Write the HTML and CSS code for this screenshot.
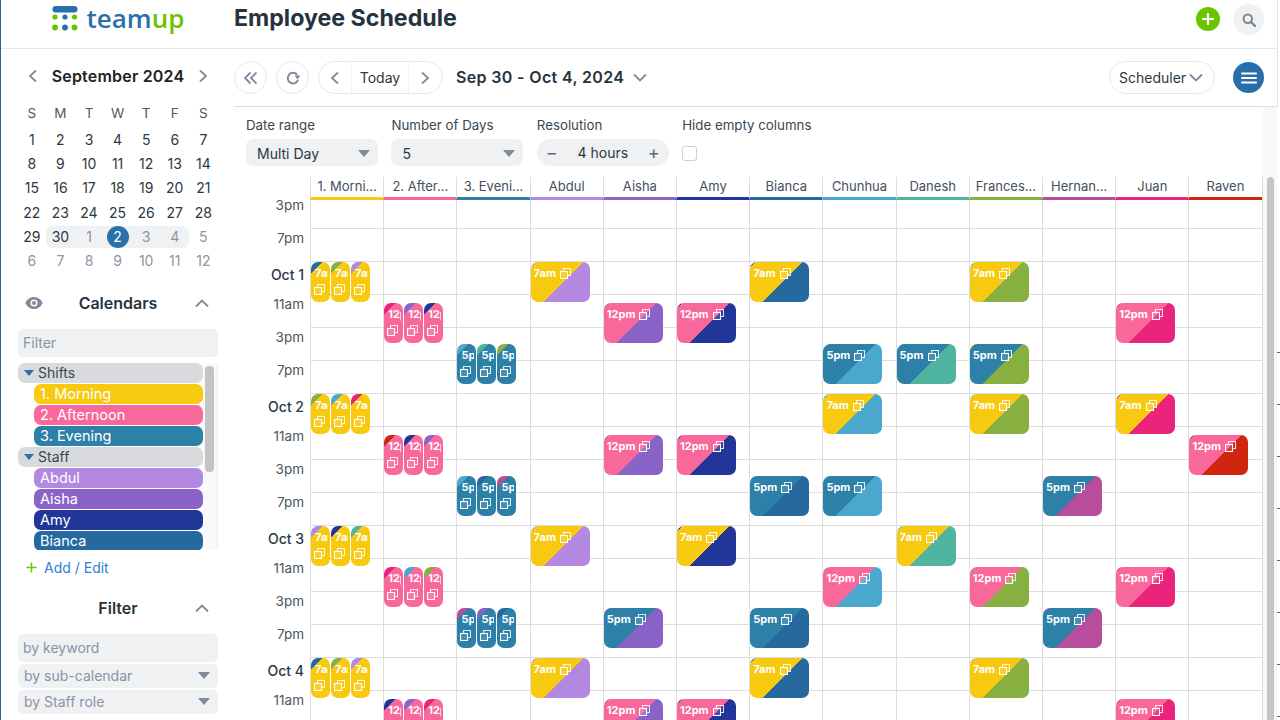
FILE: index.html
```html
<!DOCTYPE html>
<html lang="en">
<head>
  <meta charset="UTF-8" />
  <meta name="viewport" content="width=device-width, initial-scale=1.0" />
  <title>Employee Schedule</title>
  <link rel="stylesheet" href="styles.css">
</head>
<body>
  <div class="app">
    <header class="topbar">
      <div class="brand">
        <svg class="brand-mark" width="26" height="26" viewBox="0 0 26 26">
          <rect x="0.5" y="0" width="25" height="6.5" rx="3.2" fill="#2a70ad"/>
          <circle cx="3" cy="11" r="2.6" fill="#6cc400"/>
          <circle cx="13" cy="11" r="2.6" fill="#2a70ad"/>
          <circle cx="22.5" cy="11" r="2.6" fill="#6cc400"/>
          <circle cx="3" cy="21.5" r="2.9" fill="#6cc400"/>
          <circle cx="13" cy="21.5" r="2.9" fill="#2a70ad"/>
          <circle cx="22.5" cy="21.5" r="2.9" fill="#6cc400"/>
        </svg>
        <span class="brand-name">team<span class="brand-up">up</span></span>
      </div>
      <h1 class="page-title">Employee Schedule</h1>
      <button class="add-btn" aria-label="Add">
        <svg width="12" height="12" viewBox="0 0 12 12"><path d="M6 1v10M1 6h10" stroke="#fff" stroke-width="2.2" stroke-linecap="round"/></svg>
      </button>
      <button class="search-btn" aria-label="Search">
        <svg width="14" height="14" viewBox="0 0 14 14" fill="none"><circle cx="5.8" cy="5.8" r="4.2" stroke="#7b858f" stroke-width="2"/><path d="M9 9l4 4" stroke="#7b858f" stroke-width="2.4" stroke-linecap="round"/></svg>
      </button>
    </header>

    <div class="workspace">
      <aside class="sidebar">
        <div class="month-head">
          <svg class="chev" width="10" height="14" viewBox="0 0 10 14"><path d="M8 1.5L2 7l6 5.5" /></svg>
          <span class="month-title">September 2024</span>
          <svg class="chev" width="10" height="14" viewBox="0 0 10 14"><path d="M2 1.5L8 7l-6 5.5" /></svg>
        </div>
        <div class="month-grid" id="monthGrid"></div>

        <div class="panel-head panel-head-calendars">
          <svg class="eye" width="18" height="12" viewBox="0 0 18 12"><path d="M9 0C5 0 2 2.500 0.300 6 2 9.500 5 12 9 12s7-2.500 8.700-6C16 2.500 13 0 9 0z" fill="#7f8a9b"/><circle cx="9" cy="6" r="3.500" fill="#fff"/><circle cx="9" cy="6" r="2" fill="#7f8a9b"/></svg>
          <h2>Calendars</h2>
          <svg class="chev-up" width="14" height="9" viewBox="0 0 14 9"><path d="M1 7.500L7 1.500l6 6" /></svg>
        </div>
        <div class="field field-input">Filter</div>

        <div class="cal-list">
          <div class="cal-items" id="calItems"></div>
          <div class="cal-scroll"><div class="cal-thumb"></div></div>
        </div>

        <div class="add-edit">
          <svg width="11" height="11" viewBox="0 0 11 11"><path d="M5.500 0.500v10M0.500 5.500h10" stroke="#6cc400" stroke-width="1.500"/></svg>
          <span>Add / Edit</span>
        </div>

        <div class="panel-head panel-head-filter">
          <h2>Filter</h2>
          <svg class="chev-up" width="14" height="9" viewBox="0 0 14 9"><path d="M1 7.500L7 1.500l6 6" /></svg>
        </div>
        <div class="field field-input">by keyword</div>
        <div class="field field-select">by sub-calendar<i class="caret"></i></div>
        <div class="field field-select">by Staff role<i class="caret"></i></div>
      </aside>

      <main class="main">
        <div class="toolbar">
          <button class="round-btn" aria-label="Collapse">
            <svg class="chev" width="16" height="14" viewBox="0 0 16 14"><path d="M7.500 1.500L2 7l5.500 5.500M13.500 1.500L8 7l5.500 5.500" stroke-width="2"/></svg>
          </button>
          <button class="round-btn" aria-label="Refresh">
            <svg width="16" height="16" viewBox="0 0 16 16" fill="none"><path d="M13 10A5.300 5.300 0 1 1 12.300 5" stroke="#7f8a9b" stroke-width="2"/><path d="M9.500 5.500h6l-3 4z" fill="#7f8a9b"/></svg>
          </button>
          <div class="date-nav">
            <svg class="chev" width="10" height="14" viewBox="0 0 10 14"><path d="M8 1.500L2 7l6 5.500" /></svg>
            <span>Today</span>
            <svg class="chev" width="10" height="14" viewBox="0 0 10 14"><path d="M2 1.500L8 7l-6 5.500" /></svg>
          </div>
          <div class="date-title">Sep 30 - Oct 4, 2024</div>
          <svg class="chev date-chev" width="14" height="9" viewBox="0 0 14 9"><path d="M1 1.500l6 6 6-6" /></svg>
          <div class="view-select">
            <span>Scheduler</span>
            <svg class="chev" width="14" height="9" viewBox="0 0 14 9"><path d="M1 1.500l6 6 6-6" /></svg>
          </div>
          <button class="menu-btn" aria-label="Menu">
            <svg width="16" height="12" viewBox="0 0 16 12"><path d="M1 1.500h14M1 6h14M1 10.500h14" stroke="#fff" stroke-width="2" stroke-linecap="round"/></svg>
          </button>
        </div>

        <div class="content">
          <div class="content-inner">
            <div class="options">
              <div class="option">
                <label>Date range</label>
                <div class="opt-select">Multi Day<i class="caret"></i></div>
              </div>
              <div class="option">
                <label>Number of Days</label>
                <div class="opt-select">5<i class="caret"></i></div>
              </div>
              <div class="option">
                <label>Resolution</label>
                <div class="opt-stepper"><span class="step">−</span><span>4 hours</span><span class="step">+</span></div>
              </div>
              <div class="option">
                <label>Hide empty columns</label>
                <div class="opt-check"><span class="checkbox"></span></div>
              </div>
            </div>
            <div class="schedule">
              <div class="sched-head" id="schedHead"></div>
              <div class="sched-body" id="schedBody"></div>
            </div>
          </div>
          <div class="content-scroll"><div class="content-thumb"></div></div>
        </div>
      </main>
      <div class="edge"></div>
    </div>
  </div>
  <script src="script.js"></script>
</body>
</html>
```

FILE: styles.css
```css
* {
  box-sizing: border-box;
}
html, body {
  margin: 0;
  height: 100%;
  overflow: hidden;
}
body {
  font-family: Inter, "Liberation Sans", sans-serif;
  font-size: 14px;
  color: #2c3842;
  background: #fff;
}
button {
  padding: 0;
  border: none;
  font: inherit;
  display: flex;
  align-items: center;
  justify-content: center;
}
h1, h2 {
  margin: 0;
}
.app {
  height: 720px;
  display: flex;
  flex-direction: column;
  border-left: 1px solid #26699f;
}

/* top bar */
.topbar {
  height: 49px;
  flex: none;
  display: flex;
  align-items: flex-start;
  border-bottom: 1px solid #e3e8f2;
  margin-right: 3px;
}
.brand {
  width: 233px;
  padding: 6px 0 0 51px;
  display: flex;
  gap: 8.5px;
}
.brand-mark {
  flex: none;
}
.brand-name {
  font-family: "Open Sans", sans-serif;
  font-weight: 600;
  font-size: 26px;
  line-height: 25px;
  color: #2a70ad;
}
.brand-up {
  color: #6cc400;
}
.page-title {
  flex: 1;
  font-size: 23.2px;
  font-weight: 700;
  line-height: 36px;
  color: #25333f;
}
.add-btn {
  width: 24px;
  height: 24px;
  margin-top: 7px;
  border-radius: 50%;
  background: #6cc400;
}
.search-btn {
  width: 31px;
  height: 31px;
  margin: 4px 13px 0 13px;
  border-radius: 50%;
  background: #eff1f3;
}

.workspace {
  flex: 1;
  min-height: 0;
  display: flex;
}

/* sidebar */
.sidebar {
  width: 233px;
  flex: none;
  padding: 0 16px 0 17px;
}
.chev path, .chev-up path {
  fill: none;
  stroke: #7f8a9b;
  stroke-width: 1.8;
}
.month-head {
  height: 30px;
  margin-top: 12px;
  padding: 0 10px;
  display: flex;
  align-items: center;
  justify-content: space-between;
}
.month-title {
  font-size: 16px;
  font-weight: 600;
  letter-spacing: 0.2px;
  color: #222;
}
.month-grid {
  margin-left: -0.5px;
  padding-top: 10px;
  display: grid;
  grid-template-columns: repeat(7, 28.6px);
  grid-template-rows: 27px repeat(6, 24.2px);
  text-align: center;
  line-height: 24px;
}
.day-name {
  color: #4d5864;
  font-size: 13.5px;
}
.day.other {
  color: #8995a5;
}
.day.range {
  line-height: 22px;
  border-top: 1px solid transparent;
  border-bottom: 1px solid transparent;
  background: #eff1f3;
  background-clip: padding-box;
}
.day.range-start {
  border-radius: 7px 0 0 7px;
}
.day.range-end {
  border-radius: 0 7px 7px 0;
}
.day.today span {
  display: block;
  width: 22px;
  height: 22px;
  margin: 0 auto;
  border-radius: 50%;
  color: #fff;
  background: #2a70ad;
}
.panel-head {
  position: relative;
  height: 24px;
  display: flex;
  align-items: center;
  justify-content: center;
}
.panel-head h2 {
  font-size: 16px;
  font-weight: 600;
  color: #25333f;
}
.panel-head-calendars {
  margin-top: 18px;
}
.panel-head-filter {
  margin-top: 10px;
}
.eye {
  position: absolute;
  left: 7px;
  top: 6px;
}
.chev-up {
  position: absolute;
  right: 9px;
  top: 8px;
}
.field {
  margin-top: 2px;
  padding: 0 5px 1px;
  border-radius: 5px;
  background: #eff1f3;
  color: #8a94a6;
  display: flex;
  align-items: center;
  justify-content: space-between;
}
.field-input {
  height: 28px;
  margin-top: 14px;
}
.field-select {
  height: 24px;
  padding: 0 8px 2px 6px;
}
.caret {
  width: 0;
  height: 0;
  border-left: 6px solid transparent;
  border-right: 6px solid transparent;
  border-top: 7px solid #7f8a9b;
}
.cal-list {
  height: 187px;
  margin-top: 6px;
  display: flex;
  overflow: hidden;
}
.cal-items {
  width: 185px;
  flex: none;
}
.cal-group, .cal-item {
  height: 20px;
  margin-bottom: 1px;
  border-radius: 7px;
  line-height: 20px;
}
.cal-group {
  padding-left: 6px;
  background: #d9dadd;
  color: #3a4652;
  display: flex;
  align-items: center;
  gap: 4px;
}
.cal-group .caret {
  border-left-width: 5px;
  border-right-width: 5px;
  border-top: 6px solid #2a70ad;
}
.cal-item {
  margin-left: 16px;
  padding-left: 6px;
  color: #fff;
  font-size: 14.5px;
}
.cal-scroll {
  width: 15px;
  padding: 3px 3px 0 2px;
  background: #f9f9f9;
  border-right: 1px solid #ececec;
}
.cal-thumb {
  height: 106px;
  border-radius: 4px;
  background: #c4c4c4;
}
.add-edit {
  height: 36px;
  padding: 0 0 2px 8px;
  display: flex;
  align-items: center;
  gap: 7px;
  color: #2b80d8;
}

/* toolbar */
.main {
  flex: 1;
  min-width: 0;
  display: flex;
  flex-direction: column;
}
.toolbar {
  height: 58px;
  flex: none;
  padding-top: 12px;
  padding-right: 13px;
  display: flex;
  align-items: flex-start;
  border-bottom: 1px solid #dcdee2;
}
.round-btn {
  width: 33px;
  height: 33px;
  margin-right: 9px;
  border: 1px solid #e6e8f0;
  border-radius: 50%;
  background: #fff;
}
.date-nav {
  width: 125px;
  height: 33px;
  padding: 0 12px 0 11px;
  display: flex;
  align-items: center;
  justify-content: space-between;
  border: 1px solid #e6e8f0;
  border-radius: 17px;
  color: #2c3842;
}
.date-nav span {
  width: 58px;
  height: 100%;
  line-height: 31px;
  text-align: center;
  border-left: 1px solid #f1f2f6;
  border-right: 1px solid #f1f2f6;
}
.date-title {
  margin-left: 13px;
  font-size: 16px;
  font-weight: 600;
  letter-spacing: 0.35px;
  line-height: 33px;
  color: #25333f;
}
.date-chev {
  margin: 12px 0 0 9px;
}
.view-select {
  width: 106px;
  height: 33px;
  margin-left: auto;
  padding: 0 11px 0 9px;
  display: flex;
  align-items: center;
  justify-content: space-between;
  border: 1px solid #e6e8f0;
  border-radius: 17px;
}
.menu-btn {
  width: 31px;
  height: 31px;
  margin: 1px 0 0 18px;
  border-radius: 50%;
  background: #2a6ea9;
}

/* options */
.content {
  flex: 1;
  min-height: 0;
  display: flex;
}
.content-inner {
  width: 1028.6px;
  flex: none;
  overflow: hidden;
}
.options {
  height: 70px;
  padding: 10px 0 0 12px;
  display: flex;
  gap: 13.4px;
}
.option {
  width: 132px;
}
.option label {
  display: block;
  height: 22px;
  font-size: 13.3px;
  line-height: 17px;
  color: #3a4652;
  white-space: nowrap;
}
.opt-select {
  height: 27px;
  padding: 1px 8px 0 11px;
  display: flex;
  align-items: center;
  justify-content: space-between;
  border-radius: 7px;
  background: #eff1f3;
}
.opt-stepper {
  height: 27px;
  padding: 0 9px;
  display: flex;
  align-items: center;
  justify-content: space-between;
  border-radius: 14px;
  background: #eff1f3;
}
.step {
  color: #5d6875;
  font-size: 18px;
  line-height: 18px;
}
.opt-check {
  padding-top: 7px;
}
.checkbox {
  display: block;
  width: 15px;
  height: 15px;
  border: 1px solid #ccd2da;
  border-radius: 3px;
  background: #fff;
}

/* schedule */
.schedule {
  border-right: 1px solid #dcdcdc;
}
.sched-head {
  height: 23px;
  padding-left: 76px;
  display: grid;
  grid-template-columns: repeat(13, 1fr);
}
.col-name {
  border-left: 1px solid #dcdcdc;
  border-bottom: 3px solid #888;
  font-size: 13px;
  line-height: 18px;
  text-align: center;
  white-space: nowrap;
  color: #44505c;
}
.sched-body {
  display: grid;
  grid-template-columns: 76px repeat(13, 1fr);
}
.times {
  text-align: right;
  padding-right: 6px;
}
.time {
  height: 33px;
  line-height: 18px;
  font-size: 13.5px;
  color: #4a5560;
  white-space: nowrap;
}
.time.first {
  margin-top: -4px;
}
.time.day-start {
  padding-top: 4px;
  font-size: 14px;
  font-weight: 500;
  color: #2c3842;
}
.col {
  position: relative;
  border-left: 1px solid #dcdcdc;
}
.cell {
  height: 33px;
  border-bottom: 1px solid #dcdcdc;
}
.cell.first {
  height: 29px;
}
.shift {
  position: absolute;
  left: 0;
  width: 59px;
  height: 40px;
  display: flex;
  gap: 1px;
}
.event {
  flex: 1;
  min-width: 0;
  padding: 4px 2px 0 3px;
  display: flex;
  flex-wrap: wrap;
  align-content: flex-start;
  align-items: center;
  gap: 4px;
  border-radius: 7px;
  color: #fff;
  font-size: 11px;
  font-weight: 700;
  line-height: 14px;
}
.event-label {
  max-width: 100%;
  overflow: hidden;
  white-space: nowrap;
}
.shift.multi .event-label {
  padding-left: 1px;
}
.event svg {
  flex: none;
}

/* scrollbars at the edge */
.content-scroll {
  flex: 1;
  padding: 70px 3px 0 4px;
  background: #f8f8f8;
}
.content-thumb {
  height: 100%;
  border-radius: 4px 4px 0 0;
  background: #c4c4c4;
}
.edge {
  width: 3px;
  flex: none;
  margin-top: -49px;
  background:
    linear-gradient(#e2e2e2, #e2e2e2) 0 0 / 1px 107px no-repeat,
    repeating-linear-gradient(180deg, #2a70ad 0 1px, #fff 1px 52px) 0 352px / 100% 368px no-repeat;
}
```

FILE: script.js
```js
const colors = {
  morning: '#f7c90f',
  afternoon: '#f9689a',
  evening: '#2d80a8',
  abdul: '#b388e0',
  aisha: '#8963c8',
  amy: '#223699',
  bianca: '#26699f',
  chunhua: '#4aa8cf',
  danesh: '#4fb5a0',
  frances: '#88b041',
  hernan: '#b84d9e',
  juan: '#e9247a',
  raven: '#d0260f'
};

const columns = [
  ['1. Morni...', 'morning'], ['2. After...', 'afternoon'], ['3. Eveni...', 'evening'],
  ['Abdul', 'abdul'], ['Aisha', 'aisha'], ['Amy', 'amy'], ['Bianca', 'bianca'],
  ['Chunhua', 'chunhua'], ['Danesh', 'danesh'], ['Frances...', 'frances'],
  ['Hernan...', 'hernan'], ['Juan', 'juan'], ['Raven', 'raven']
];

const shiftNames = ['morning', 'afternoon', 'evening'];
const shiftLabels = ['7am', '12pm', '5pm'];

// who works which shift: [day, shift] per staff column (day 0 is Oct 1)
const staffShifts = {
  abdul: [[0, 0], [2, 0], [3, 0]],
  aisha: [[0, 1], [1, 1], [2, 2], [3, 1]],
  amy: [[0, 1], [1, 1], [2, 0], [3, 1]],
  bianca: [[0, 0], [1, 2], [2, 2], [3, 0]],
  chunhua: [[0, 2], [1, 0], [1, 2], [2, 1]],
  danesh: [[0, 2], [2, 0]],
  frances: [[0, 0], [0, 2], [1, 0], [2, 1], [3, 0]],
  hernan: [[1, 2], [2, 2]],
  juan: [[0, 1], [1, 0], [2, 1], [3, 1]],
  raven: [[1, 1]]
};

// staff order inside the three shift columns
const shiftStaff = {
  morning: [['bianca', 'frances', 'abdul'], ['frances', 'chunhua', 'juan'], ['abdul', 'amy', 'danesh'], ['bianca', 'frances', 'abdul']],
  afternoon: [['juan', 'aisha', 'amy'], ['raven', 'amy', 'aisha'], ['juan', 'chunhua', 'frances'], ['amy', 'aisha', 'juan']],
  evening: [['chunhua', 'danesh', 'frances'], ['chunhua', 'bianca', 'hernan'], ['hernan', 'aisha', 'bianca']]
};

const copyIcon = '<svg width="11" height="11" viewBox="0 0 11 11" fill="none" stroke="#fff" stroke-width="1.1">' +
  '<rect x="0.5" y="3.5" width="7" height="7" fill="rgba(255,255,255,.12)"/>' +
  '<path d="M3.500 3V.5h7v7H8" opacity=".85"/></svg>';

const shiftTop = (day, shift) => 62 + 132 * day + 41 * shift;

function eventEl(label, background) {
  const ev = document.createElement('div');
  ev.className = 'event';
  ev.style.background = background;
  ev.innerHTML = `<span class="event-label">${label}</span>${copyIcon}`;
  return ev;
}

function shiftEl(day, shift, multi) {
  const el = document.createElement('div');
  el.className = multi ? 'shift multi' : 'shift';
  el.style.top = `${shiftTop(day, shift)}px`;
  return el;
}

function renderMonth() {
  const grid = document.getElementById('monthGrid');
  ['S', 'M', 'T', 'W', 'T', 'F', 'S'].forEach(d => {
    grid.insertAdjacentHTML('beforeend', `<div class="day-name">${d}</div>`);
  });
  const days = [];
  for (let i = 1; i <= 30; i++) days.push({ n: i });
  for (let i = 1; i <= 12; i++) days.push({ n: i, other: true });
  days.forEach((d, i) => {
    const cell = document.createElement('div');
    cell.className = 'day';
    if (d.other) cell.classList.add('other');
    if (i >= 29 && i <= 33) cell.classList.add('range');
    if (i === 29) cell.classList.add('range-start');
    if (i === 33) cell.classList.add('range-end');
    if (d.other && d.n === 2) cell.classList.add('today');
    cell.innerHTML = `<span>${d.n}</span>`;
    grid.appendChild(cell);
  });
}

function renderCalendars() {
  const list = document.getElementById('calItems');
  const rows = [
    ['Shifts'], ['1. Morning', 'morning'], ['2. Afternoon', 'afternoon'], ['3. Evening', 'evening'],
    ['Staff'], ['Abdul', 'abdul'], ['Aisha', 'aisha'], ['Amy', 'amy'], ['Bianca', 'bianca']
  ];
  rows.forEach(([name, key]) => {
    const row = document.createElement('div');
    if (key) {
      row.className = 'cal-item';
      row.style.background = colors[key];
      row.textContent = name;
    } else {
      row.className = 'cal-group';
      row.innerHTML = `<i class="caret"></i><span>${name}</span>`;
    }
    list.appendChild(row);
  });
}

function renderSchedule() {
  const head = document.getElementById('schedHead');
  const body = document.getElementById('schedBody');
  const rowNames = ['3pm', '7pm', 'Oct 1', '11am', '3pm', '7pm', 'Oct 2', '11am', '3pm', '7pm', 'Oct 3', '11am', '3pm', '7pm', 'Oct 4', '11am'];

  const times = document.createElement('div');
  times.className = 'times';
  rowNames.forEach((name, i) => {
    const t = document.createElement('div');
    t.className = 'time';
    if (i === 0) t.classList.add('first');
    if (name.startsWith('Oct')) t.classList.add('day-start');
    t.textContent = name;
    times.appendChild(t);
  });
  body.appendChild(times);

  columns.forEach(([name, key]) => {
    const title = document.createElement('div');
    title.className = 'col-name';
    title.style.borderBottomColor = colors[key];
    title.textContent = name;
    head.appendChild(title);

    const col = document.createElement('div');
    col.className = 'col';
    rowNames.forEach((_, i) => {
      const cell = document.createElement('div');
      cell.className = i === 0 ? 'cell first' : 'cell';
      col.appendChild(cell);
    });

    if (shiftStaff[key]) {
      const shift = shiftNames.indexOf(key);
      shiftStaff[key].forEach((staff, day) => {
        const el = shiftEl(day, shift, true);
        staff.forEach(s => {
          el.appendChild(eventEl(shiftLabels[shift],
            `linear-gradient(135deg, ${colors[s]} 20%, ${colors[key]} 20%)`));
        });
        col.appendChild(el);
      });
    } else {
      staffShifts[key].forEach(([day, shift]) => {
        const el = shiftEl(day, shift, false);
        const a = colors[shiftNames[shift]];
        const b = colors[key];
        el.appendChild(eventEl(shiftLabels[shift],
          `linear-gradient(135deg, ${b} 6%, ${a} 6%, ${a} 53%, ${b} 53%)`));
        col.appendChild(el);
      });
    }
    body.appendChild(col);
  });
}

renderMonth();
renderCalendars();
renderSchedule();
```
